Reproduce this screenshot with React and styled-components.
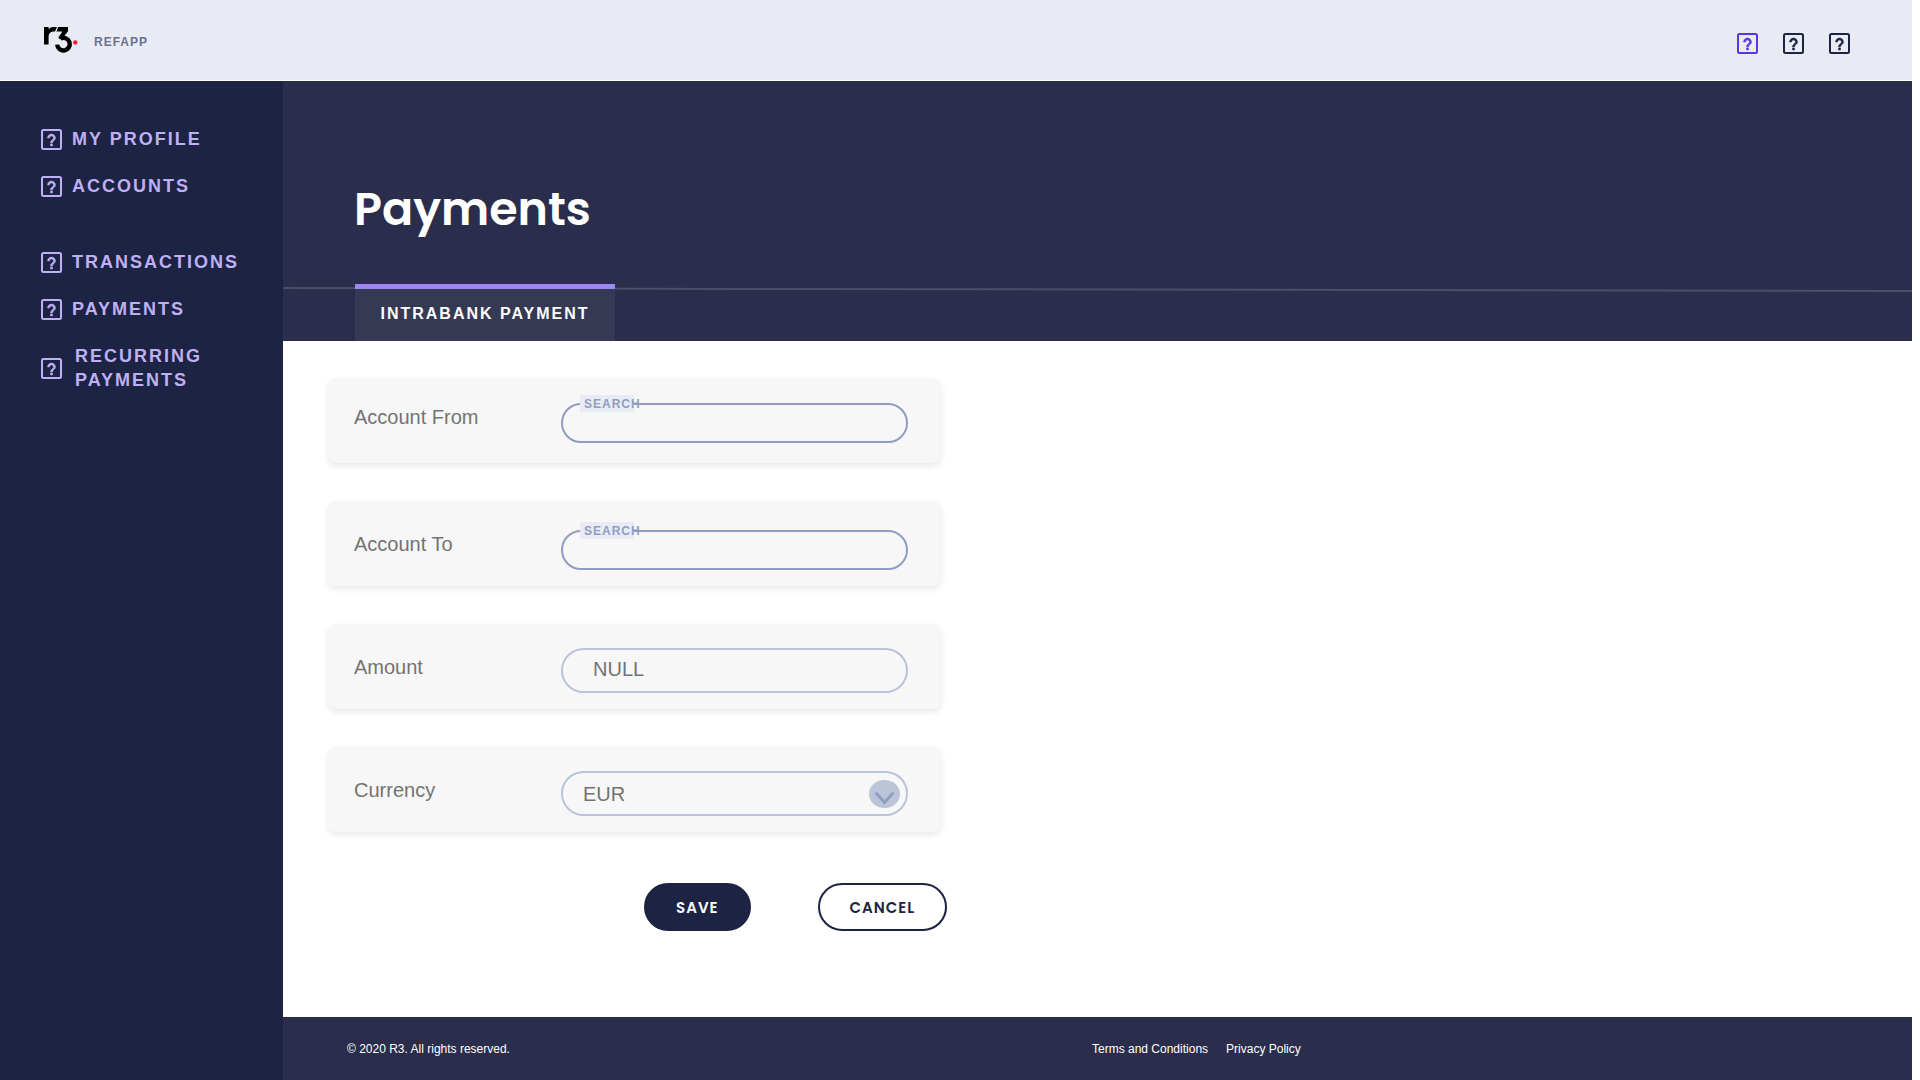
import React from "react";
import styled, { createGlobalStyle } from "styled-components";

const color = {
  navy: "#1d2342",
  indigo: "#2a2d4b",
  tab: "#363954",
  haze: "#e8ebf3",
  lilac: "#bfaff5",
  violet: "#9e87f5",
  accent: "#5c33e6",
  steel: "#8f9dc2",
  mist: "#bac4d9",
  card: "#f7f7f7",
  grey: "#737373",
};

const sans = `"Liberation Sans", Arial, Helvetica, sans-serif`;
const display = `Poppins, Inter, "Open Sans", sans-serif`;

const GlobalStyle = createGlobalStyle`
  *, *::before, *::after { box-sizing: border-box; }
  body { margin: 0; background: #fff; font-family: ${sans}; }
`;

const Page = styled.div`
  display: flex;
  flex-direction: column;
  gap: 1px;
  min-height: 100vh;
  padding-right: 8px;
`;

const Header = styled.header`
  display: flex;
  align-items: center;
  justify-content: space-between;
  height: 80px;
  padding: 0 62px 0 43px;
  background: ${color.haze};
`;

const Brand = styled.a`
  display: flex;
  align-items: center;
  gap: 15px;
  color: #6a7090;
  font-size: 12px;
  font-weight: 700;
  line-height: 16px;
  letter-spacing: 1px;
  text-decoration: none;
`;

const BrandName = styled.span`
  padding-top: 4px;
`;

const Actions = styled.div`
  display: flex;
  gap: 25px;
  padding-top: 7px;
`;

const IconButton = styled.button`
  display: block;
  padding: 0;
  border: 0;
  background: none;
  color: ${(p) => (p.$active ? color.accent : color.navy)};
  cursor: pointer;
`;

const Glyph = styled.svg`
  display: block;
  flex: none;
  width: 21px;
  height: 21px;
`;

const Body = styled.div`
  display: flex;
  flex: 1;
`;

const Sidebar = styled.nav`
  display: flex;
  flex: none;
  flex-direction: column;
  gap: 52px;
  width: 283px;
  padding: 46px 24px 24px 41px;
  background: ${color.navy};
`;

const NavGroup = styled.ul`
  display: flex;
  flex-direction: column;
  gap: 23px;
  margin: 0;
  padding: 0;
  list-style: none;
`;

const NavLink = styled.a`
  display: flex;
  align-items: center;
  gap: ${(p) => (p.$multiline ? "13px" : "10px")};
  color: ${color.lilac};
  font-size: 18px;
  font-weight: 700;
  line-height: 24px;
  letter-spacing: 2px;
  text-decoration: none;
  text-transform: uppercase;
`;

const Main = styled.div`
  display: flex;
  flex: 1;
  flex-direction: column;
  min-width: 0;
`;

const Banner = styled.div`
  padding-top: 98px;
  background: ${color.indigo};
`;

const Title = styled.h1`
  margin: 0 0 45px;
  padding-left: 71px;
  color: #fff;
  font-family: ${display};
  font-size: 46px;
  font-weight: 600;
  line-height: 60px;
`;

const Tabs = styled.div`
  position: relative;
  display: flex;
  padding-left: 72px;
`;

const Divider = styled.svg`
  position: absolute;
  top: 3px;
  left: 0;
  width: 100%;
  height: 6px;
`;

const Tab = styled.button`
  position: relative;
  width: 260px;
  height: 57px;
  padding: 0 0 2px;
  border: 0;
  border-top: 5px solid ${color.violet};
  background: ${color.tab};
  color: #fff;
  font-family: ${sans};
  font-size: 16px;
  font-weight: 700;
  letter-spacing: 2px;
  text-transform: uppercase;
  cursor: pointer;
`;

const Form = styled.form`
  flex: 1;
  padding: 37px 45px 48px;
`;

const Fields = styled.div`
  display: flex;
  flex-direction: column;
  gap: 38px;
  max-width: 613px;
`;

const Card = styled.div`
  display: grid;
  grid-template-columns: 207px 1fr;
  align-items: center;
  min-height: 85px;
  padding: 0 33px ${(p) => (p.$raised ? "8px" : "0")} 26px;
  border-radius: 8px;
  background: ${color.card};
  box-shadow: 0 3px 6px rgba(29, 35, 66, 0.1);
`;

const Label = styled.label`
  color: ${color.grey};
  font-size: 20px;
  line-height: 24px;
`;

const Control = styled.div`
  padding-top: ${(p) => (p.$search ? "12px" : "8px")};
`;

const Anchor = styled.div`
  position: relative;
  display: flex;
`;

const TextInput = styled.input`
  width: 100%;
  height: ${(p) => (p.$search ? "40px" : "45px")};
  padding: 0 30px 2px;
  border: 2px solid ${(p) => (p.$search ? color.steel : color.mist)};
  border-radius: 24px;
  outline: 0;
  background: transparent;
  color: ${color.grey};
  font-family: ${sans};
  font-size: 20px;
`;

const Select = styled.select`
  width: 100%;
  height: 45px;
  padding: 0 48px 0 20px;
  border: 2px solid ${color.mist};
  border-radius: 24px;
  outline: 0;
  appearance: none;
  background: transparent;
  color: ${color.grey};
  font-family: ${sans};
  font-size: 20px;
`;

const Legend = styled.span`
  position: absolute;
  top: -8px;
  left: 19px;
  width: 54px;
  height: 17px;
  padding-left: 4px;
  background: ${color.haze};
  color: ${color.steel};
  font-size: 12px;
  font-weight: 700;
  line-height: 18px;
  letter-spacing: 1px;
  white-space: nowrap;
  pointer-events: none;
`;

const Chevron = styled.svg`
  position: absolute;
  top: 9px;
  right: 8px;
  width: 31px;
  height: 28px;
  pointer-events: none;
`;

const Buttons = styled.div`
  display: flex;
  gap: 67px;
  padding: 51px 0 0 316px;
`;

const Button = styled.button`
  height: 48px;
  padding: 0 30px;
  border: 2px solid ${color.navy};
  border-radius: 24px;
  background: ${(p) => (p.$primary ? color.navy : "#fff")};
  color: ${(p) => (p.$primary ? "#fff" : color.navy)};
  font-family: ${display};
  font-size: 15px;
  font-weight: 600;
  letter-spacing: 1px;
  text-transform: uppercase;
  cursor: pointer;
`;

const Footer = styled.footer`
  display: grid;
  grid-template-columns: 1fr 1fr;
  align-items: center;
  height: 63px;
  padding: 0 75px 0 64px;
  background: ${color.indigo};
  color: #fff;
  font-size: 12px;
  line-height: 16px;
`;

const FooterLinks = styled.div`
  display: flex;
  gap: 18px;
`;

const FooterLink = styled.a`
  color: #fff;
  text-decoration: none;
`;

function HelpBox() {
  return (
    <Glyph viewBox="0 0 21 21" aria-hidden="true">
      <rect x="1" y="1" width="19" height="19" rx="1.5" fill="none" stroke="currentColor" strokeWidth="2" />
      <path
        transform="translate(-1.5 -1)"
        fill="currentColor"
        stroke="currentColor"
        strokeWidth="0.5"
        d="M11 18h2v-2h-2v2zM12 6c-2.21 0-4 1.79-4 4h2c0-1.1.9-2 2-2s2 .9 2 2c0 2-3 1.75-3 5h2c0-2.25 3-2.5 3-5 0-2.21-1.79-4-4-4z"
      />
    </Glyph>
  );
}

function Logo() {
  return (
    <svg width="36" height="28" viewBox="0 0 36 28" role="img" aria-label="r3">
      <path fill="#000" d="M1 1h4.6v2.2C7 1.6 8.8 1 11 1h3l-2 4.6C8 5.4 5.6 7 5.6 11v7.5H1z" />
      <path fill="#000" d="M15.3 1H25v4.2l-4.2 5.2-3.8 3.2-1.7-2.2L19.4 5.6h-6z" />
      <path
        fill="none"
        stroke="#000"
        strokeWidth="4.4"
        d="M17.5 12.6A6.3 6.3 0 1 1 14.2 18.6"
      />
      <circle cx="32.3" cy="16.4" r="2.2" fill="#ee1c2e" />
    </svg>
  );
}

function NavItem({ children, multiline }) {
  return (
    <li>
      <NavLink href="#" $multiline={multiline}>
        <HelpBox />
        <span>{children}</span>
      </NavLink>
    </li>
  );
}

function SearchField({ id, label, raised }) {
  return (
    <Card $raised={raised}>
      <Label htmlFor={id}>{label}</Label>
      <Control $search>
        <Anchor>
          <TextInput id={id} type="text" $search />
          <Legend>SEARCH</Legend>
        </Anchor>
      </Control>
    </Card>
  );
}

export default function App() {
  return (
    <>
      <GlobalStyle />
      <Page>
        <Header>
          <Brand href="#">
            <Logo />
            <BrandName>REFAPP</BrandName>
          </Brand>
          <Actions>
            <IconButton type="button" aria-label="Help" $active>
              <HelpBox />
            </IconButton>
            <IconButton type="button" aria-label="Notifications">
              <HelpBox />
            </IconButton>
            <IconButton type="button" aria-label="Account">
              <HelpBox />
            </IconButton>
          </Actions>
        </Header>
        <Body>
          <Sidebar>
            <NavGroup>
              <NavItem>My profile</NavItem>
              <NavItem>Accounts</NavItem>
            </NavGroup>
            <NavGroup>
              <NavItem>Transactions</NavItem>
              <NavItem>Payments</NavItem>
              <NavItem multiline>Recurring payments</NavItem>
            </NavGroup>
          </Sidebar>
          <Main>
            <Banner>
              <Title>Payments</Title>
              <Tabs>
                <Divider viewBox="0 0 100 6" preserveAspectRatio="none" aria-hidden="true">
                  <line x1="0" y1="1" x2="100" y2="4" stroke="#4b4e69" strokeWidth="2" />
                </Divider>
                <Tab type="button">Intrabank payment</Tab>
              </Tabs>
            </Banner>
            <Form onSubmit={(e) => e.preventDefault()}>
              <Fields>
                <SearchField id="from" label="Account From" raised />
                <SearchField id="to" label="Account To" />
                <Card>
                  <Label htmlFor="amount">Amount</Label>
                  <Control>
                    <Anchor>
                      <TextInput id="amount" type="text" defaultValue="NULL" />
                    </Anchor>
                  </Control>
                </Card>
                <Card>
                  <Label htmlFor="currency">Currency</Label>
                  <Control>
                    <Anchor>
                      <Select id="currency" defaultValue="EUR">
                        <option>EUR</option>
                      </Select>
                      <Chevron viewBox="0 0 31 28" aria-hidden="true">
                        <ellipse cx="15.5" cy="14" rx="15.5" ry="14" fill="#bcc4d8" />
                        <path
                          d="M7.5 13.5l8 9 8-9"
                          fill="none"
                          stroke="#8f9dc2"
                          strokeWidth="3"
                          strokeLinecap="round"
                        />
                      </Chevron>
                    </Anchor>
                  </Control>
                </Card>
              </Fields>
              <Buttons>
                <Button type="submit" $primary>
                  Save
                </Button>
                <Button type="button">Cancel</Button>
              </Buttons>
            </Form>
            <Footer>
              <span>© 2020 R3. All rights reserved.</span>
              <FooterLinks>
                <FooterLink href="#">Terms and Conditions</FooterLink>
                <FooterLink href="#">Privacy Policy</FooterLink>
              </FooterLinks>
            </Footer>
          </Main>
        </Body>
      </Page>
    </>
  );
}
